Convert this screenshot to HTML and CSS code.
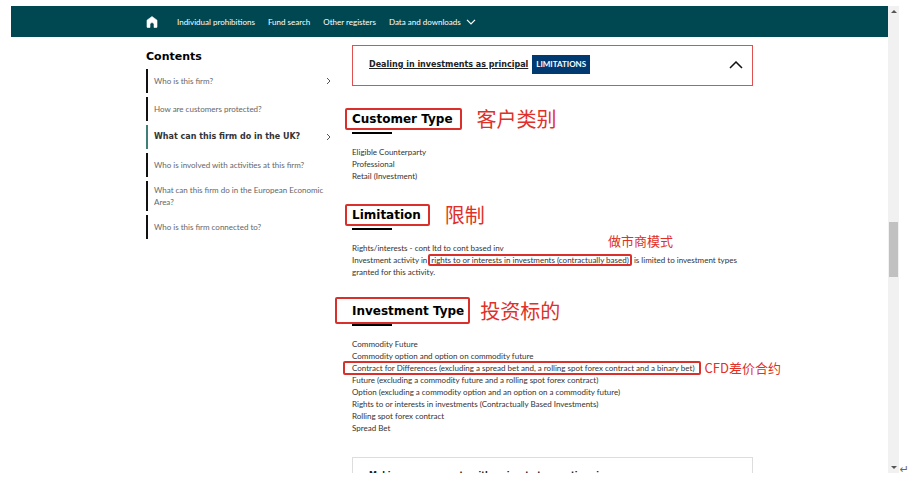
FILE: index.html
```html
<!DOCTYPE html>
<html lang="en">
<head>
    <meta charset="UTF-8">
    <meta name="viewport" content="width=device-width, initial-scale=1.0">
    <title>Firm permissions</title>
    <link rel="stylesheet" href="styles.css">
</head>
<body>
    <div class="window">
        <div class="page">
            <header class="topbar">
                <nav class="container topbar-nav">
                    <a class="home-link" href="#" aria-label="Home">
                        <svg width="12" height="12" viewBox="0 0 12 12"><path d="M6 0.5 L11 4.2 V11 Q11 11.5 10.5 11.5 H8 V8.4 Q8 6.6 6 6.6 Q4 6.6 4 8.4 V11.5 H1.5 Q1 11.5 1 11 V4.2 Z" fill="#fff" stroke="#fff" stroke-width="0.6" stroke-linejoin="round"/></svg>
                    </a>
                    <a href="#">Individual prohibitions</a>
                    <a href="#">Fund search</a>
                    <a href="#">Other registers</a>
                    <a href="#" class="has-menu">Data and downloads
                        <svg width="10" height="6" viewBox="0 0 10 6"><path d="M1 0.8 L5 5 L9 0.8" fill="none" stroke="#fff" stroke-width="1.2"/></svg>
                    </a>
                </nav>
            </header>

            <div class="container columns">
                <aside class="sidebar">
                    <h2 class="sidebar-title">Contents</h2>
                    <ul class="contents-list">
                        <li><a href="#">Who is this firm?</a><svg class="chevron" width="5" height="8" viewBox="0 0 5 8"><path d="M1 1 L4 4 L1 7"/></svg></li>
                        <li><a href="#">How are customers protected?</a></li>
                        <li class="active"><a href="#">What can this firm do in the UK?</a><svg class="chevron" width="5" height="8" viewBox="0 0 5 8"><path d="M1 1 L4 4 L1 7"/></svg></li>
                        <li><a href="#">Who is involved with activities at this firm?</a></li>
                        <li><a href="#">What can this firm do in the European Economic Area?</a></li>
                        <li><a href="#">Who is this firm connected to?</a></li>
                    </ul>
                </aside>

                <main class="content">
                    <div class="accordion open">
                        <a class="accordion-title" href="#">Dealing in investments as principal</a>
                        <span class="tag">LIMITATIONS</span>
                        <button class="toggle" aria-label="Collapse">
                            <svg width="14" height="8" viewBox="0 0 14 8"><path d="M1 7 L7 1 L13 7" fill="none" stroke="#111" stroke-width="1.5"/></svg>
                        </button>
                    </div>

                    <section>
                        <h3><span class="marked">Customer Type<em class="note" lang="zh">客户类别</em></span></h3>
                        <ul class="lines">
                            <li>Eligible Counterparty</li>
                            <li>Professional</li>
                            <li>Retail (Investment)</li>
                        </ul>
                    </section>

                    <section>
                        <h3><span class="marked">Limitation<em class="note" lang="zh">限制</em></span></h3>
                        <p class="lines">Rights/interests - cont ltd to cont based inv<br>
                        Investment activity in <span class="marked-text">rights to or interests in investments (contractually based)<em class="note note-above" lang="zh">做市商模式</em></span> is limited to investment types granted for this activity.</p>
                    </section>

                    <section>
                        <h3><span class="marked marked-large">Investment Type<em class="note" lang="zh">投资标的</em></span></h3>
                        <ul class="lines">
                            <li>Commodity Future</li>
                            <li>Commodity option and option on commodity future</li>
                            <li><span class="marked-line">Contract for Differences (excluding a spread bet and, a rolling spot forex contract and a binary bet)<em class="note note-small" lang="zh">CFD差价合约</em></span></li>
                            <li>Future (excluding a commodity future and a rolling spot forex contract)</li>
                            <li>Option (excluding a commodity option and an option on a commodity future)</li>
                            <li>Rights to or interests in investments (Contractually Based Investments)</li>
                            <li>Rolling spot forex contract</li>
                            <li>Spread Bet</li>
                        </ul>
                    </section>

                    <div class="accordion">
                        <a class="accordion-title" href="#">Making arrangements with a view to transactions in</a>
                    </div>
                </main>
            </div>
        </div>

        <div class="scrollbar">
            <span class="arrow arrow-up"></span>
            <span class="thumb"></span>
            <span class="arrow arrow-down"></span>
        </div>
        <span class="return-mark">↵</span>
    </div>
</body>
</html>
```
FILE: styles.css
```css
* {
    box-sizing: border-box;
}

body {
    margin: 0;
    padding: 6px 22px 12px 11px;
    background-color: #fff;
    color: #333;
    font-family: Lato, sans-serif;
    font-size: 8px;
    line-height: 12px;
}

h2, h3, p, ul {
    margin: 0;
    padding: 0;
}

ul {
    list-style: none;
}

svg {
    display: block;
    flex: none;
}

.window {
    position: relative;
    display: flex;
    height: calc(100vh - 18px);
}

.page {
    flex: 1;
    overflow: hidden;
}

.container {
    max-width: 607px;
    margin: 0 auto;
}

/* Top bar */
.topbar {
    background-color: #004851;
}

.topbar-nav {
    display: flex;
    align-items: center;
    gap: 13px;
    height: 31px;
}

.topbar-nav a {
    color: #fff;
    text-decoration: none;
}

.topbar-nav .home-link {
    margin-right: 6px;
}

.topbar-nav .has-menu {
    display: flex;
    align-items: center;
    gap: 5px;
}

.columns {
    display: grid;
    grid-template-columns: 189px minmax(0, 1fr);
    gap: 17px;
    padding-top: 8px;
}

/* Sidebar */
.sidebar-title {
    margin: 4px 0;
    color: #000;
    font-family: "DejaVu Sans", sans-serif;
    font-size: 11px;
    line-height: 16px;
}

.contents-list {
    display: grid;
    gap: 4px;
}

.contents-list li {
    display: flex;
    align-items: center;
    justify-content: space-between;
    min-height: 24px;
    padding: 3px 4px 3px 6px;
    border-left: 2px solid #111;
}

.contents-list a {
    color: #666;
    text-decoration: none;
}

.contents-list .active {
    border-color: #3f7f78;
}

.contents-list .active a {
    color: #333;
    font-family: "DejaVu Sans", sans-serif;
    font-weight: bold;
}

.chevron {
    fill: none;
    stroke: #555;
    stroke-width: 1;
}

/* Accordion */
.accordion {
    display: flex;
    align-items: center;
    gap: 4px;
    height: 41px;
    padding: 0 9px 4px 16px;
    border: 1px solid #ddd;
}

.accordion.open {
    padding-bottom: 2px;
    border-color: #e05050;
}

.accordion-title {
    color: #222;
    font-family: "DejaVu Sans", sans-serif;
    font-weight: bold;
}

.tag {
    padding: 4px;
    background-color: #003a70;
    color: #fff;
    font-weight: bold;
    line-height: 11px;
}

.toggle {
    margin-left: auto;
    padding: 0;
    border: 0;
    background: none;
}

/* Permission details */
section {
    margin: 23px 0;
}

h3 {
    color: #000;
    font-family: "DejaVu Sans", sans-serif;
    font-size: 12px;
    line-height: 20px;
}

h3::after {
    content: "";
    display: block;
    width: 40px;
    height: 2px;
    margin: 3px 0 12px;
    background-color: #000;
}

/* Red markers and notes */
.marked,
.marked-text,
.marked-line {
    position: relative;
}

.marked::before,
.marked-text::before,
.marked-line::before {
    content: "";
    position: absolute;
    inset: -4px -9px -4px -7px;
    border: 2px solid #d9302c;
    border-radius: 2px;
}

.marked-large::before {
    inset: -7px -6px -6px -17px;
}

.marked-text {
    margin: 0 3px 0 2px;
}

.marked-text::before {
    inset: -1px -3px;
}

.marked-line::before {
    inset: -2px -6px -2px -9px;
}

.note {
    position: absolute;
    top: 50%;
    left: 100%;
    margin-left: 24px;
    transform: translateY(-50%);
    color: #e03028;
    font-family: "Noto Sans CJK SC", sans-serif;
    font-size: 20px;
    font-style: normal;
    font-weight: normal;
    line-height: 24px;
    white-space: nowrap;
}

.marked-large .note {
    margin-left: 16px;
}

.note-above {
    top: -14px;
    left: auto;
    right: -44px;
    font-size: 13px;
}

.note-small {
    margin-left: 10px;
    font-size: 13px;
}

/* Scrollbar */
.scrollbar {
    display: flex;
    flex-direction: column;
    align-items: center;
    width: 11px;
    padding: 4px 1px;
    background-color: #f1f1f1;
}

.arrow {
    border: 3px solid transparent;
}

.arrow-up {
    border-top: 0;
    border-bottom-color: #555;
}

.arrow-down {
    border-bottom: 0;
    border-top-color: #555;
    margin-top: auto;
}

.thumb {
    width: 9px;
    height: 12%;
    margin-top: 209px;
    background-color: #c1c1c1;
}

.return-mark {
    position: absolute;
    right: -10px;
    bottom: -3px;
    color: #666;
    font-family: "DejaVu Sans", sans-serif;
    font-size: 11px;
}
```
